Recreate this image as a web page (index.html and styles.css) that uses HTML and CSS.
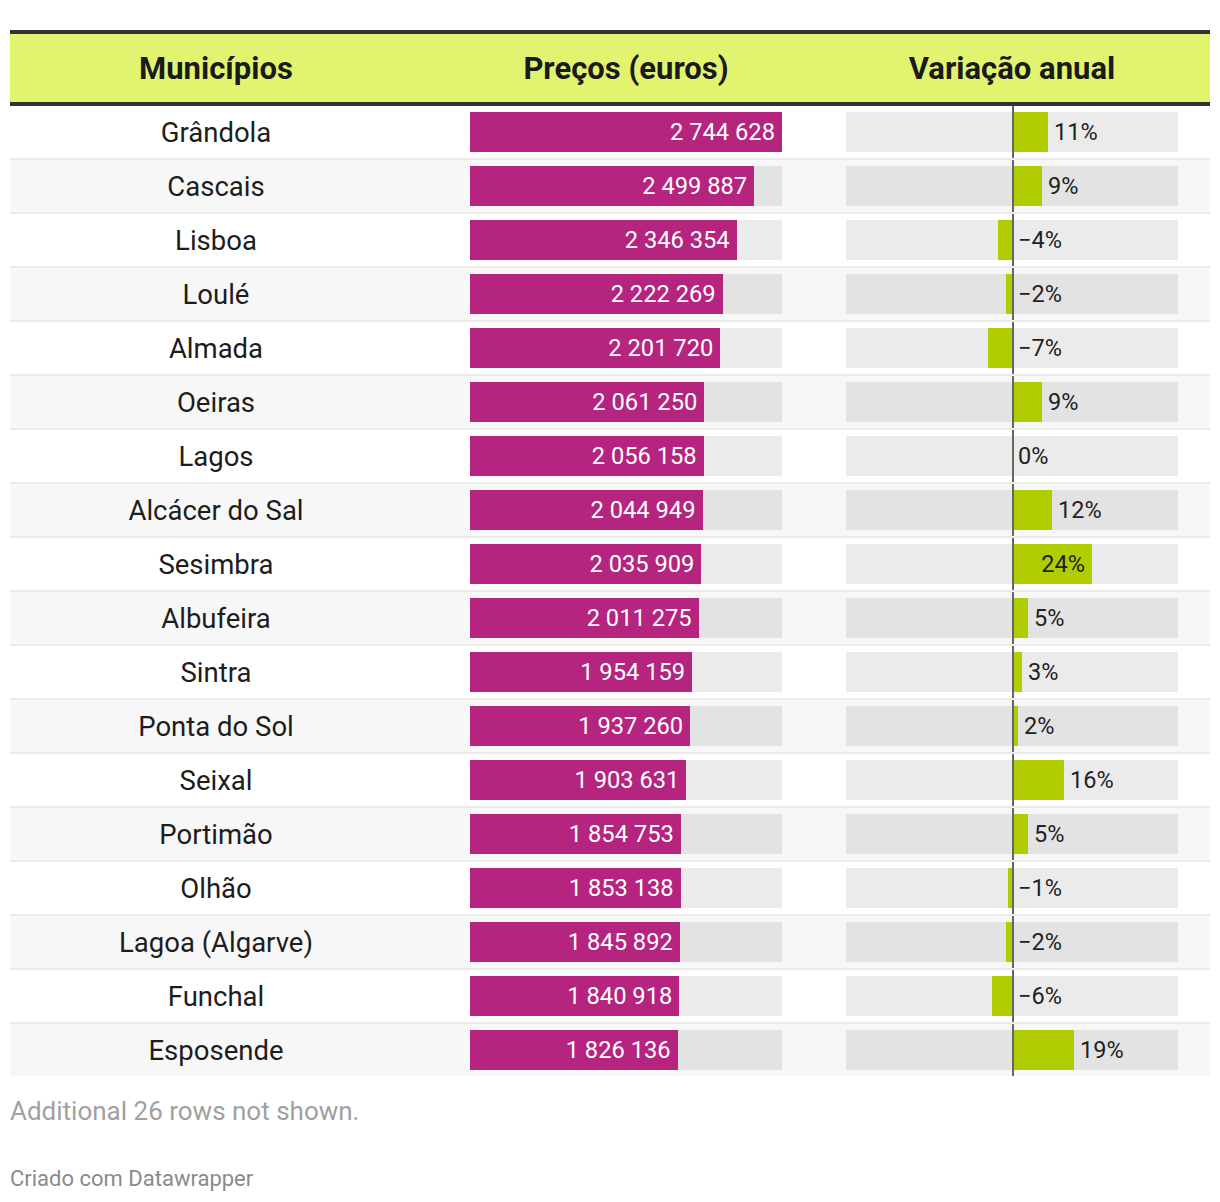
FILE: index.html
```html
<!DOCTYPE html>
<html lang="pt">
<head>
<meta charset="utf-8">
<title>Preços por município</title>
<link rel="stylesheet" href="styles.css">
</head>
<body>
<div class="chart">
  <div class="table">
    <div class="thead">
      <div class="th c1">Municípios</div>
      <div class="th c2">Preços (euros)</div>
      <div class="th c3">Variação anual</div>
    </div>
    <div class="row">
      <div class="cell c1">Grândola</div>
      <div class="cell c2"><div class="ptrack"><div class="pbar" style="width:312px">2 744 628</div></div></div>
      <div class="cell c3"><div class="neg"><div class="band"></div></div><div class="axis"></div><div class="pos"><div class="band"><div class="vbar" style="width:34px"></div><span class="vlab">11%</span></div></div></div>
    </div>
    <div class="row">
      <div class="cell c1">Cascais</div>
      <div class="cell c2"><div class="ptrack"><div class="pbar" style="width:284.2px">2 499 887</div></div></div>
      <div class="cell c3"><div class="neg"><div class="band"></div></div><div class="axis"></div><div class="pos"><div class="band"><div class="vbar" style="width:28px"></div><span class="vlab">9%</span></div></div></div>
    </div>
    <div class="row">
      <div class="cell c1">Lisboa</div>
      <div class="cell c2"><div class="ptrack"><div class="pbar" style="width:266.7px">2 346 354</div></div></div>
      <div class="cell c3"><div class="neg"><div class="band"><div class="vbar" style="width:14px"></div></div></div><div class="axis"></div><div class="pos"><div class="band"><span class="vlab n">−4%</span></div></div></div>
    </div>
    <div class="row">
      <div class="cell c1">Loulé</div>
      <div class="cell c2"><div class="ptrack"><div class="pbar" style="width:252.6px">2 222 269</div></div></div>
      <div class="cell c3"><div class="neg"><div class="band"><div class="vbar" style="width:6px"></div></div></div><div class="axis"></div><div class="pos"><div class="band"><span class="vlab n">−2%</span></div></div></div>
    </div>
    <div class="row">
      <div class="cell c1">Almada</div>
      <div class="cell c2"><div class="ptrack"><div class="pbar" style="width:250.3px">2 201 720</div></div></div>
      <div class="cell c3"><div class="neg"><div class="band"><div class="vbar" style="width:24px"></div></div></div><div class="axis"></div><div class="pos"><div class="band"><span class="vlab n">−7%</span></div></div></div>
    </div>
    <div class="row">
      <div class="cell c1">Oeiras</div>
      <div class="cell c2"><div class="ptrack"><div class="pbar" style="width:234.3px">2 061 250</div></div></div>
      <div class="cell c3"><div class="neg"><div class="band"></div></div><div class="axis"></div><div class="pos"><div class="band"><div class="vbar" style="width:28px"></div><span class="vlab">9%</span></div></div></div>
    </div>
    <div class="row">
      <div class="cell c1">Lagos</div>
      <div class="cell c2"><div class="ptrack"><div class="pbar" style="width:233.7px">2 056 158</div></div></div>
      <div class="cell c3"><div class="neg"><div class="band"></div></div><div class="axis"></div><div class="pos"><div class="band"><span class="vlab zero">0%</span></div></div></div>
    </div>
    <div class="row">
      <div class="cell c1">Alcácer do Sal</div>
      <div class="cell c2"><div class="ptrack"><div class="pbar" style="width:232.5px">2 044 949</div></div></div>
      <div class="cell c3"><div class="neg"><div class="band"></div></div><div class="axis"></div><div class="pos"><div class="band"><div class="vbar" style="width:38px"></div><span class="vlab">12%</span></div></div></div>
    </div>
    <div class="row">
      <div class="cell c1">Sesimbra</div>
      <div class="cell c2"><div class="ptrack"><div class="pbar" style="width:231.4px">2 035 909</div></div></div>
      <div class="cell c3"><div class="neg"><div class="band"></div></div><div class="axis"></div><div class="pos"><div class="band"><div class="vbar inside" style="width:78px"><span class="vlab">24%</span></div></div></div></div>
    </div>
    <div class="row">
      <div class="cell c1">Albufeira</div>
      <div class="cell c2"><div class="ptrack"><div class="pbar" style="width:228.6px">2 011 275</div></div></div>
      <div class="cell c3"><div class="neg"><div class="band"></div></div><div class="axis"></div><div class="pos"><div class="band"><div class="vbar" style="width:14px"></div><span class="vlab">5%</span></div></div></div>
    </div>
    <div class="row">
      <div class="cell c1">Sintra</div>
      <div class="cell c2"><div class="ptrack"><div class="pbar" style="width:222.1px">1 954 159</div></div></div>
      <div class="cell c3"><div class="neg"><div class="band"></div></div><div class="axis"></div><div class="pos"><div class="band"><div class="vbar" style="width:8px"></div><span class="vlab">3%</span></div></div></div>
    </div>
    <div class="row">
      <div class="cell c1">Ponta do Sol</div>
      <div class="cell c2"><div class="ptrack"><div class="pbar" style="width:220.2px">1 937 260</div></div></div>
      <div class="cell c3"><div class="neg"><div class="band"></div></div><div class="axis"></div><div class="pos"><div class="band"><div class="vbar" style="width:4px"></div><span class="vlab">2%</span></div></div></div>
    </div>
    <div class="row">
      <div class="cell c1">Seixal</div>
      <div class="cell c2"><div class="ptrack"><div class="pbar" style="width:216.4px">1 903 631</div></div></div>
      <div class="cell c3"><div class="neg"><div class="band"></div></div><div class="axis"></div><div class="pos"><div class="band"><div class="vbar" style="width:50px"></div><span class="vlab">16%</span></div></div></div>
    </div>
    <div class="row">
      <div class="cell c1">Portimão</div>
      <div class="cell c2"><div class="ptrack"><div class="pbar" style="width:210.8px">1 854 753</div></div></div>
      <div class="cell c3"><div class="neg"><div class="band"></div></div><div class="axis"></div><div class="pos"><div class="band"><div class="vbar" style="width:14px"></div><span class="vlab">5%</span></div></div></div>
    </div>
    <div class="row">
      <div class="cell c1">Olhão</div>
      <div class="cell c2"><div class="ptrack"><div class="pbar" style="width:210.7px">1 853 138</div></div></div>
      <div class="cell c3"><div class="neg"><div class="band"><div class="vbar" style="width:4px"></div></div></div><div class="axis"></div><div class="pos"><div class="band"><span class="vlab n">−1%</span></div></div></div>
    </div>
    <div class="row">
      <div class="cell c1">Lagoa (Algarve)</div>
      <div class="cell c2"><div class="ptrack"><div class="pbar" style="width:209.8px">1 845 892</div></div></div>
      <div class="cell c3"><div class="neg"><div class="band"><div class="vbar" style="width:6px"></div></div></div><div class="axis"></div><div class="pos"><div class="band"><span class="vlab n">−2%</span></div></div></div>
    </div>
    <div class="row">
      <div class="cell c1">Funchal</div>
      <div class="cell c2"><div class="ptrack"><div class="pbar" style="width:209.3px">1 840 918</div></div></div>
      <div class="cell c3"><div class="neg"><div class="band"><div class="vbar" style="width:20px"></div></div></div><div class="axis"></div><div class="pos"><div class="band"><span class="vlab n">−6%</span></div></div></div>
    </div>
    <div class="row last">
      <div class="cell c1">Esposende</div>
      <div class="cell c2"><div class="ptrack"><div class="pbar" style="width:207.6px">1 826 136</div></div></div>
      <div class="cell c3"><div class="neg"><div class="band"></div></div><div class="axis"></div><div class="pos"><div class="band"><div class="vbar" style="width:60px"></div><span class="vlab">19%</span></div></div></div>
    </div>
  </div>
  <p class="note">Additional 26 rows not shown.</p>
  <p class="credit">Criado com Datawrapper</p>
</div>
</body>
</html>
```
FILE: styles.css
```css
* { box-sizing: border-box; }
html, body { margin: 0; padding: 0; background: #fff; }
body {
  font-family: Roboto, "Liberation Sans", Arial, sans-serif;
  color: #1d1d1d;
}
.chart {
  padding: 30px 10px 0 10px;
}
.table {
  width: 1200px;
}
.thead {
  display: grid;
  grid-template-columns: 412px 408px 380px;
  background: #e2f46f;
  border-top: 4px solid #333;
  border-bottom: 4px solid #333;
  height: 76px;
  align-items: center;
}
.th {
  font-weight: 700;
  font-size: 31px;
  text-align: center;
  color: #1a1a1a;
}
.th.c2 { padding: 0 48px; }
.th.c3 { padding: 0 32px 0 16px; }
.row {
  display: grid;
  grid-template-columns: 412px 408px 380px;
  height: 54px;
  border-bottom: 2px solid #ebebeb;
}
.row:nth-child(odd) { background: #f7f7f7; }
.row:nth-child(even) { background: #fff; }
.row.last { border-bottom: none; height: 52px; }
.cell {
  display: flex;
  align-items: center;
  font-size: 27.5px;
}
.cell.c1 { justify-content: center; }
.cell.c2 { padding: 0 48px; }
.ptrack {
  width: 312px;
  height: 40px;
  background: rgba(0,0,0,0.08);
  display: flex;
}
.pbar {
  height: 40px;
  background: #b5247f;
  color: #fff;
  display: flex;
  align-items: center;
  justify-content: flex-end;
  padding-right: 7px;
  white-space: nowrap;
  font-size: 23.7px;
}
.cell.c3 {
  padding: 0 32px 0 16px;
  align-items: stretch;
}
.neg, .pos {
  display: flex;
  align-items: center;
}
.neg { width: 166px; }
.pos { flex: 1; }
.band {
  width: 100%;
  height: 40px;
  background: rgba(0,0,0,0.08);
  display: flex;
  align-items: center;
}
.neg .band { justify-content: flex-end; }
.axis {
  width: 2px;
  background: #666;
}
.vbar {
  height: 40px;
  background: #b1cd00;
  flex: none;
}
.vbar.inside {
  display: flex;
  align-items: center;
  justify-content: flex-end;
  padding-right: 7px;
}
.vlab {
  font-size: 23.5px;
  color: #222;
  margin-left: 6px;
  white-space: nowrap;
}
.vbar.inside .vlab { margin-left: 0; }
.vlab.zero { margin-left: 4px; }
.vlab.n { margin-left: 4px; }
.note {
  margin: 20px 0 0 0;
  font-size: 26px;
  color: #a0a0a0;
  line-height: 30px;
}
.credit {
  margin: 40px 0 0 0;
  font-size: 22px;
  color: #8a8a8a;
  line-height: 26px;
}
```
